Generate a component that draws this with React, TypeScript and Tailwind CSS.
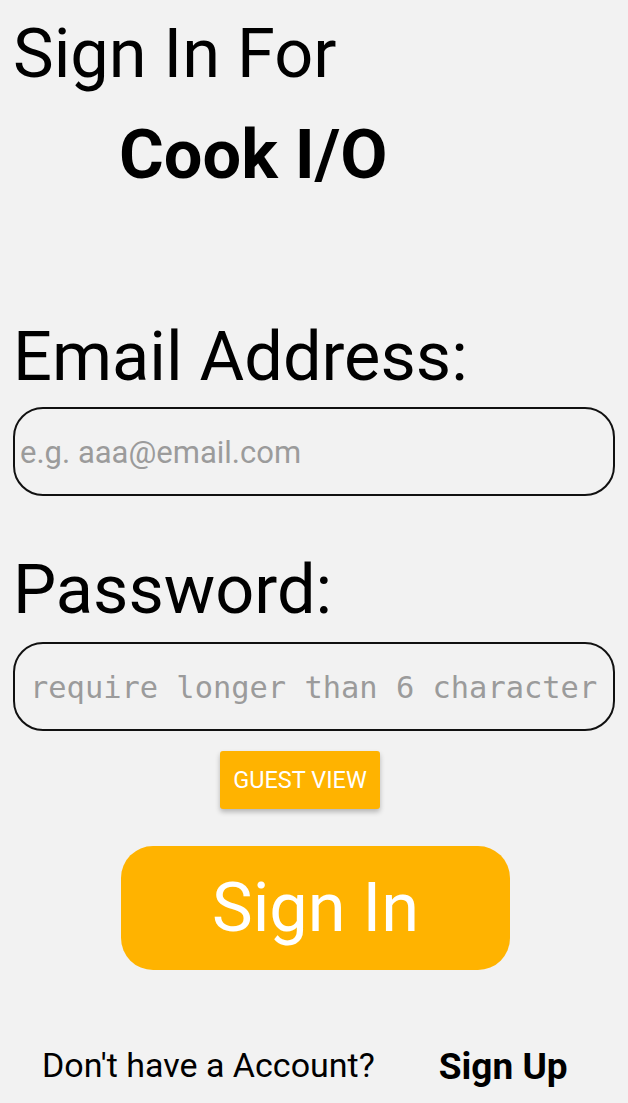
import React from "react";

export default function App() {
  return (
    <div className="min-h-[1103px] w-full bg-[#f2f2f2] font-['Roboto',sans-serif] text-black flex flex-col px-[13px]">
      <h1 className="mt-[15px] text-[68.5px] leading-[78px] font-normal">Sign In For</h1>
      <h2 className="mt-[23px] pl-[106px] text-[68.5px] leading-[78px] font-bold">Cook I/O</h2>

      <label className="mt-[124px] text-[68.5px] leading-[78px] font-normal">Email Address:</label>
      <div className="mt-[11px] h-[89px] w-[602px] rounded-[30px] border-2 border-[#111] flex items-center px-[5px] pt-[3px]">
        <input
          className="w-full bg-transparent outline-none text-[31px] text-black placeholder:text-[#9b9b9b] font-['Roboto',sans-serif]"
          placeholder="e.g. aaa@email.com"
        />
      </div>

      <label className="mt-[55px] text-[68.5px] leading-[78px] font-normal">Password:</label>
      <div className="mt-[13px] h-[89px] w-[602px] rounded-[30px] border-2 border-[#111] flex items-center pl-[15px] pr-[3px] pt-[3px]">
        <input
          type="password"
          className="w-full bg-transparent outline-none text-[30.4px] placeholder:text-[#9b9b9b] font-['DejaVu_Sans_Mono',monospace]"
          placeholder="require longer than 6 character"
        />
      </div>

      <button className="mt-[20px] ml-[207px] h-[58px] w-[160px] rounded-[3px] bg-[#ffb300] text-white text-[23.5px] uppercase shadow-[0_3px_5px_rgba(0,0,0,0.25)] flex items-center justify-center pt-[2px]">
        Guest View
      </button>

      <button className="mt-[37px] ml-[108px] h-[124px] w-[389px] rounded-[32px] bg-[#ffb300] text-white text-[68.5px] leading-none flex items-center justify-center">
        Sign In
      </button>

      <div className="mt-[75px] flex items-start">
        <span className="ml-[29px] text-[34px] leading-[40px]">Don't have a Account?</span>
        <span className="ml-[64px] text-[37px] leading-[43px] font-bold">Sign Up</span>
      </div>
    </div>
  );
}
